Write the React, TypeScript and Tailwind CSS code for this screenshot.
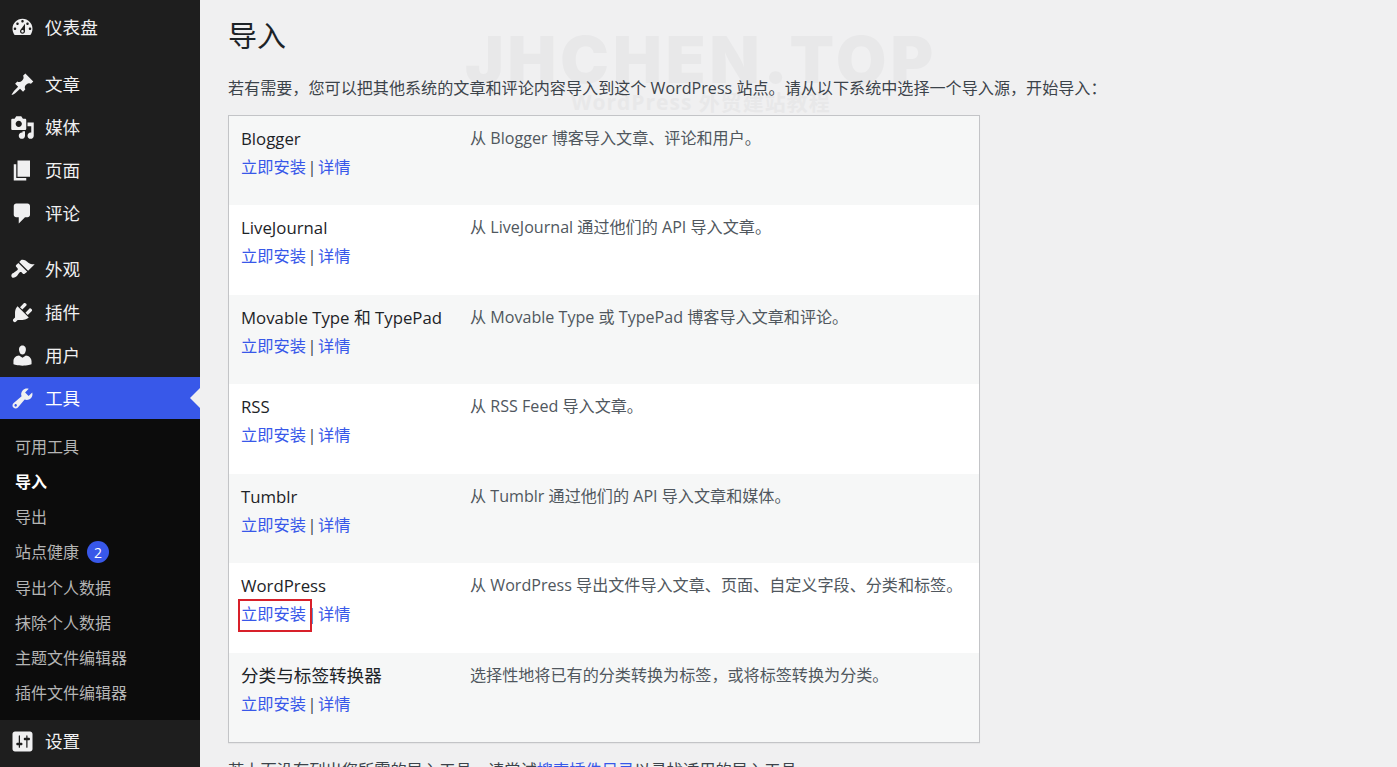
const font = '[font-family:"Open_Sans","Noto_Sans_CJK_SC",sans-serif]';

const menuTop = [
  { label: '仪表盘', d: 'M3.76 16h12.48c1.1-1.37 1.76-3.11 1.76-5 0-4.42-3.58-8-8-8s-8 3.58-8 8c0 1.89.66 3.63 1.76 5zM10 4c.55 0 1 .45 1 1s-.45 1-1 1-1-.45-1-1 .45-1 1-1zM6 6c.55 0 1 .45 1 1s-.45 1-1 1-1-.45-1-1 .45-1 1-1zm8 0c.55 0 1 .45 1 1s-.45 1-1 1-1-.45-1-1 .45-1 1-1zm-5.37 5.55L12 7v6c0 1.1-.9 2-2 2s-2-.9-2-2c0-.57.24-1.08.63-1.45zM4 10c.55 0 1 .45 1 1s-.45 1-1 1-1-.45-1-1 .45-1 1-1zm12 0c.55 0 1 .45 1 1s-.45 1-1 1-1-.45-1-1 .45-1 1-1zm-5 3c0-.55-.45-1-1-1s-1 .45-1 1 .45 1 1 1 1-.45 1-1z' },
];

const menuContent = [
  { label: '文章', d: 'M10.44 3.02l1.82-1.82 6.36 6.35-1.83 1.82c-1.05-.68-2.48-.57-3.41.36l-.75.75c-.92.93-1.04 2.35-.35 3.41l-1.83 1.82-2.41-2.41-2.8 2.79c-.42.42-3.38 2.71-3.8 2.29s1.86-3.39 2.28-3.81l2.79-2.79L4.1 9.36l1.83-1.82c1.05.69 2.48.57 3.4-.36l.75-.75c.93-.92 1.05-2.35.36-3.41z' },
  { label: '媒体', d: 'M13 11V4c0-.55-.45-1-1-1h-1.67L9 1H5L3.67 3H2c-.55 0-1 .45-1 1v7c0 .55.45 1 1 1h10c.55 0 1-.45 1-1zM7 4.5c1.38 0 2.5 1.12 2.5 2.5S8.38 9.5 7 9.5 4.5 8.38 4.5 7 5.62 4.5 7 4.5zM14 6h5v10.5c0 1.38-1.12 2.5-2.5 2.5S14 17.88 14 16.5s1.12-2.5 2.5-2.5c.17 0 .34.02.5.05V9h-3V6zm-4 8.05V13h2v3.5c0 1.38-1.12 2.5-2.5 2.5S7 17.88 7 16.5 8.12 14 9.5 14c.17 0 .34.02.5.05z' },
  { label: '页面', d: 'M6 15V2h10v13H6zm-1 1h8v2H3V5h2v11z' },
  { label: '评论', d: 'M5 2h9c1.1 0 2 .9 2 2v7c0 1.1-.9 2-2 2h-2l-5 5v-5H5c-1.1 0-2-.9-2-2V4c0-1.1.9-2 2-2z' },
];

const menuAdmin = [
  { label: '外观', d: 'M14.48 11.06L7.41 3.99l1.5-1.5c.5-.56 2.3-.47 3.51.32 1.21.8 1.43 1.28 2.91 2.1 1.18.64 2.45 1.26 4.45.85zm-.71.71L6.7 4.7 4.93 6.47c-.39.39-.39 1.02 0 1.41l1.06 1.06c.39.39.39 1.03 0 1.42-.6.6-1.43 1.11-2.21 1.69-.35.26-.7.53-1.01.84C1.43 13.23.4 14.98 1.7 16.3c.79.79 2.59.2 3.6-.82.31-.31.58-.66.84-1.01.58-.78 1.09-1.61 1.69-2.21.39-.39 1.03-.39 1.42 0l1.06 1.06c.39.39 1.02.39 1.41 0z' },
  { label: '插件', d: 'M13.11 4.36L9.87 7.6 8 5.73l3.24-3.24c.35-.34 1.05-.2 1.56.32.52.51.66 1.21.31 1.55zm-8 1.77l.91-1.12 9.01 9.01-1.19.84c-.71.71-2.63 1.16-3.82 1.16H6.14L4.9 17.26c-.59.59-1.54.59-2.12 0-.59-.58-.59-1.53 0-2.12l1.24-1.24v-3.88c0-1.13.4-3.19 1.09-3.89zm7.26 3.97l3.24-3.24c.34-.35 1.04-.21 1.55.31.52.51.66 1.21.31 1.55l-3.24 3.25z' },
  { label: '用户', d: 'M10 9.25c-2.27 0-2.73-3.44-2.73-3.44C7 4.02 7.82 2 9.97 2c2.16 0 2.98 2.02 2.71 3.81 0 0-.41 3.44-2.68 3.44zm0 2.57L12.72 10c2.39 0 4.52 2.33 4.52 4.53v2.49s-3.65 1.13-7.24 1.13c-3.65 0-7.24-1.13-7.24-1.13v-2.49c0-2.25 1.94-4.48 4.47-4.48z' },
];

const toolsIcon = 'M16.68 9.77c-1.34 1.34-3.3 1.67-4.95.99l-5.41 6.52c-.99.99-2.59.99-3.58 0s-.99-2.59 0-3.57l6.52-5.42c-.68-1.65-.35-3.61.99-4.95 1.28-1.28 3.12-1.62 4.72-1.06l-2.89 2.89 2.82 2.82 2.86-2.87c.53 1.58.18 3.39-1.08 4.67zM3.81 16.21c.4.39 1.04.39 1.43 0 .4-.4.4-1.04 0-1.43-.39-.4-1.03-.4-1.43 0-.39.39-.39 1.03 0 1.43z';
const settingsIcon = 'M18 16V4c0-1.1-.9-2-2-2H4c-1.1 0-2 .9-2 2v12c0 1.1.9 2 2 2h12c1.1 0 2-.9 2-2zM8 11h1c.55 0 1 .45 1 1s-.45 1-1 1H8v1.5c0 .28-.22.5-.5.5s-.5-.22-.5-.5V13H6c-.55 0-1-.45-1-1s.45-1 1-1h1V5.5c0-.28.22-.5.5-.5s.5.22.5.5V11zm5-2h-1c-.55 0-1-.45-1-1s.45-1 1-1h1V5.5c0-.28.22-.5.5-.5s.5.22.5.5V7h1c.55 0 1 .45 1 1s-.45 1-1 1h-1v5.5c0 .28-.22.5-.5.5s-.5-.22-.5-.5V9z';

const subItems = ['可用工具', '导入', '导出', '站点健康', '导出个人数据', '抹除个人数据', '主题文件编辑器', '插件文件编辑器'];

const importers = [
  { name: 'Blogger', nameSize: 'text-[16.8px]', desc: '从 Blogger 博客导入文章、评论和用户。' },
  { name: 'LiveJournal', nameSize: 'text-[16.8px]', desc: '从 LiveJournal 通过他们的 API 导入文章。' },
  { name: 'Movable Type 和 TypePad', nameSize: 'text-[16.8px]', desc: '从 Movable Type 或 TypePad 博客导入文章和评论。' },
  { name: 'RSS', nameSize: 'text-[16.8px]', desc: '从 RSS Feed 导入文章。' },
  { name: 'Tumblr', nameSize: 'text-[16.8px]', desc: '从 Tumblr 通过他们的 API 导入文章和媒体。' },
  { name: 'WordPress', nameSize: 'text-[16.8px]', desc: '从 WordPress 导出文件导入文章、页面、自定义字段、分类和标签。' },
  { name: '分类与标签转换器', nameSize: 'text-[17.6px]', desc: '选择性地将已有的分类转换为标签，或将标签转换为分类。' },
];

function MenuIcon({ d }: { d: string }) {
  return (
    <svg viewBox="0 0 20 20" className="w-[25px] h-[25px] shrink-0" fill="#f0f0f1" fillRule="evenodd">
      <path d={d} />
    </svg>
  );
}

function MenuRow({ label, d }: { label: string; d: string }) {
  return (
    <div className="h-[43px] flex items-center pl-[10px] gap-[10px] text-[#f0f0f1] text-[17.6px]">
      <MenuIcon d={d} />
      <span>{label}</span>
    </div>
  );
}

export default function App() {
  return (
    <div className={`h-[767px] w-[1397px] overflow-hidden flex bg-[#f0f0f1] ${font}`}>
      {/* Sidebar */}
      <aside className="w-[200px] shrink-0 bg-[#1e1e1e] pt-[6px]">
        {menuTop.map((m) => <MenuRow key={m.label} {...m} />)}
        <div className="h-[14px]" />
        {menuContent.map((m) => <MenuRow key={m.label} {...m} />)}
        <div className="h-[13px]" />
        {menuAdmin.map((m) => <MenuRow key={m.label} {...m} />)}

        <div className="relative h-[42px] bg-[#3858e9] flex items-center pl-[10px] gap-[10px] text-white text-[17.6px]">
          <MenuIcon d={toolsIcon} />
          <span>工具</span>
          <span className="absolute right-0 top-[11px] border-y-[10px] border-r-[10px] border-y-transparent border-r-[#f0f0f1]" />
        </div>

        <div className="bg-[#0c0c0c] pt-[10px] pb-[9px]">
          {subItems.map((s) => (
            <div
              key={s}
              className={`h-[35.25px] pl-[15px] flex items-center text-[16px] ${s === '导入' ? 'text-white font-semibold' : 'text-[#b5b5b5]'}`}
            >
              {s}
              {s === '站点健康' && (
                <span className="ml-[8px] w-[22px] h-[22px] rounded-full bg-[#3858e9] text-white text-[14px] flex items-center justify-center">2</span>
              )}
            </div>
          ))}
        </div>

        <MenuRow label="设置" d={settingsIcon} />
      </aside>

      {/* Main */}
      <main className="relative flex-1 pl-[28px] pt-[17px]">
        {/* Watermark */}
        <div className="absolute left-[268px] top-[21px] w-[466px] flex flex-col items-center pointer-events-none select-none">
          <div className="[font-family:Inter,sans-serif] text-[65px] leading-[78px] font-black text-[#e8e8e9] tracking-[4px] whitespace-nowrap">JHCHEN.TOP</div>
          <div className="text-[21px] leading-[26px] font-bold text-[#e8e8e9] tracking-[1px] whitespace-nowrap -mt-[10px]">WordPress 外贸建站教程</div>
        </div>

        <h1 className="relative text-[29px] leading-[38px] text-[#1d2327]">导入</h1>
        <p className="relative mt-[21px] text-[16.1px] leading-[24px] text-[#3c434a]">
          若有需要，您可以把其他系统的文章和评论内容导入到这个 WordPress 站点。请从以下系统中选择一个导入源，开始导入：
        </p>

        <div className="relative mt-[14.7px] w-[752px] border border-[#c3c4c7] shadow-[0_1px_1px_rgba(0,0,0,0.04)]">
          {importers.map((row, i) => (
            <div
              key={row.name}
              className={`h-[89.5px] flex pt-[10px] ${i % 2 === 0 ? 'bg-[#f6f7f7]' : 'bg-white'}`}
            >
              <div className="w-[241px] pl-[12px] shrink-0">
                <div className={`${row.nameSize} leading-[25px] text-[#1d2327] whitespace-nowrap`}>{row.name}</div>
                <div className="mt-[4px] text-[16.25px] leading-[25px] text-[#3c434a]">
                  <span className={`text-[#3858e9] ${row.name === 'WordPress' ? 'relative' : ''}`}>
                    立即安装
                    {row.name === 'WordPress' && (
                      <span className="absolute -left-[3px] -top-[4px] w-[74px] h-[33px] border-2 border-[#d8202a]" />
                    )}
                  </span>
                  <span className="mx-[1.5px]">|</span>
                  <span className="text-[#3858e9]">详情</span>
                </div>
              </div>
              <div className="text-[16.1px] leading-[25px] text-[#50575e] whitespace-nowrap">{row.desc}</div>
            </div>
          ))}
        </div>

        <p className="relative mt-[15px] text-[16.25px] leading-[24px] text-[#3c434a]">
          若上面没有列出您所需的导入工具，请尝试<span className="text-[#3858e9]">搜索插件目录</span>以寻找适用的导入工具。
        </p>
      </main>
    </div>
  );
}
